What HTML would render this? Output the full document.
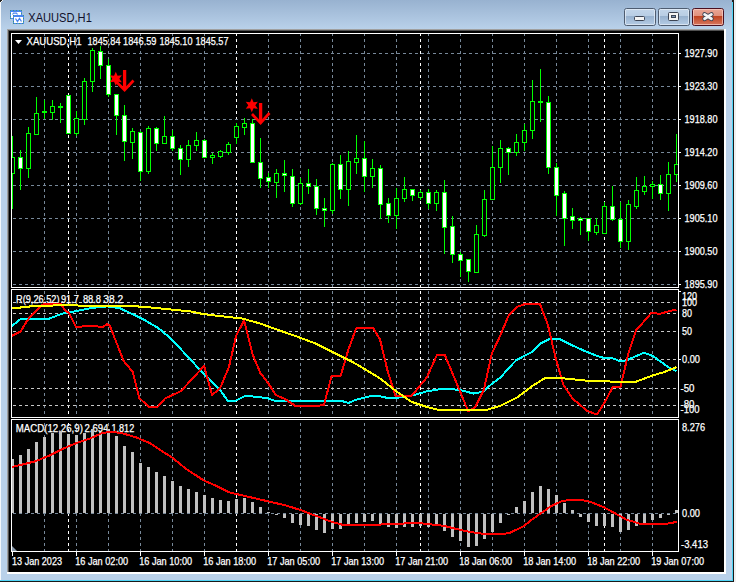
<!DOCTYPE html><html><head><meta charset="utf-8"><style>
html,body{margin:0;padding:0;width:736px;height:582px;overflow:hidden;background:#f0f0f0;font-family:"Liberation Sans", sans-serif;}
.a{position:absolute;}
svg{position:absolute;left:0;top:0;}
text{font-family:"Liberation Sans", sans-serif;}
</style></head><body>
<div class="a" style="left:0;top:0;width:733px;height:582px;background:#b9d1ea"></div><div class="a" style="left:0;top:0;width:733px;height:29px;background:linear-gradient(#98b2d0,#b9d1ea)"></div><div class="a" style="left:0;top:0;width:1px;height:582px;background:#f4f8fc"></div><div class="a" style="left:732px;top:0;width:1px;height:581px;background:#4fd4f6"></div><div class="a" style="left:733px;top:0;width:1px;height:582px;background:#1a1a1a"></div><div class="a" style="left:0;top:580px;width:733px;height:1px;background:#4fd4f6"></div><div class="a" style="left:0;top:581px;width:734px;height:1px;background:#1a1a1a"></div><div class="a" style="left:0;top:0;width:2px;height:2px;background:#202020"></div><div class="a" style="left:1px;top:1px;width:1px;height:1px;background:#f0f0f0"></div><div class="a" style="left:2px;top:0;width:1px;height:1px;background:#f0f0f0"></div><div class="a" style="left:732px;top:0;width:2px;height:2px;background:#202020"></div><div class="a" style="left:7px;top:29px;width:719px;height:545px;background:#fff"></div><div class="a" style="left:7px;top:29px;width:717px;height:543px;background:#a0a0a0"></div><div class="a" style="left:8px;top:30px;width:716px;height:542px;background:#505050"></div><div class="a" style="left:9px;top:31px;width:715px;height:541px;background:#000"></div><svg width="736" height="582" viewBox="0 0 736 582"><text x="28.3" y="22" font-size="12.5" textLength="63.5" lengthAdjust="spacingAndGlyphs" fill="#10102a">XAUUSD,H1</text><g shape-rendering="crispEdges"><rect x="10.5" y="10.5" width="11" height="8" fill="#fff" stroke="#4a86f0"/><rect x="10" y="10" width="12" height="2" fill="#4a86f0"/><rect x="13.5" y="15.5" width="10" height="8" fill="#fff" stroke="#4a86f0"/><rect x="13" y="15" width="11" height="1.5" fill="#4a86f0"/><path d="M10.5,10 V19 M13.5,15 V24 M10,18.5 H13 M10,10.5 H22 M13,23.5 H24 M21.5,10 V15 M23.5,15 V24" stroke="#3e9a78" stroke-width="1" stroke-dasharray="1 2" fill="none"/></g><polyline points="15.5,18.5 17.5,21.5 19.5,18.5 21.5,21.5" fill="none" stroke="#4a86f0" stroke-width="1.3"/><polyline points="12.5,14.5 13.5,13.2 15,13.2 16.5,13.2 17.5,14.5" fill="none" stroke="#4a86f0" stroke-width="1.2"/><defs><linearGradient id="gb" x1="0" y1="0" x2="0" y2="1"><stop offset="0" stop-color="#c4d6ea"/><stop offset="0.45" stop-color="#b8cde4"/><stop offset="0.47" stop-color="#98b2cf"/><stop offset="1" stop-color="#b6cde6"/></linearGradient><linearGradient id="gr" x1="0" y1="0" x2="0" y2="1"><stop offset="0" stop-color="#eaa898"/><stop offset="0.45" stop-color="#e0907c"/><stop offset="0.47" stop-color="#c04422"/><stop offset="1" stop-color="#d87a62"/></linearGradient></defs><rect x="624.5" y="8.5" width="31" height="17" rx="2" fill="url(#gb)" stroke="#4e5c70"/><rect x="625.5" y="9.5" width="29" height="15" rx="1" fill="none" stroke="#e8f0f8" stroke-opacity="0.7"/><rect x="634.5" y="16.5" width="10" height="4" rx="1" fill="#f4f4f4" stroke="#3c4454"/><rect x="658.5" y="8.5" width="31" height="17" rx="2" fill="url(#gb)" stroke="#4e5c70"/><rect x="659.5" y="9.5" width="29" height="15" rx="1" fill="none" stroke="#e8f0f8" stroke-opacity="0.7"/><rect x="668.5" y="12.5" width="10" height="8" rx="1" fill="#f4f4f4" stroke="#3c4454"/><rect x="671.5" y="15.5" width="4" height="2" fill="#7e98b8" stroke="#3c4454"/><rect x="692.5" y="8.5" width="31" height="17" rx="2" fill="url(#gr)" stroke="#4a1020"/><rect x="693.5" y="9.5" width="29" height="15" rx="1" fill="none" stroke="#f8d0c8" stroke-opacity="0.7"/><path d="M704.6,14.4 L711.4,18.8 M711.4,14.4 L704.6,18.8" stroke="#3c4454" stroke-width="4.6" stroke-linecap="round"/><path d="M704.6,14.4 L711.4,18.8 M711.4,14.4 L704.6,18.8" stroke="#f4f4f4" stroke-width="2.8" stroke-linecap="round"/><g shape-rendering="crispEdges"><line x1="44.5" y1="34" x2="44.5" y2="287" stroke="#778899" stroke-width="1" stroke-dasharray="3 3" stroke-dashoffset="1"/><line x1="76.5" y1="34" x2="76.5" y2="287" stroke="#778899" stroke-width="1" stroke-dasharray="3 3" stroke-dashoffset="1"/><line x1="108.5" y1="34" x2="108.5" y2="287" stroke="#778899" stroke-width="1" stroke-dasharray="3 3" stroke-dashoffset="1"/><line x1="140.5" y1="34" x2="140.5" y2="287" stroke="#778899" stroke-width="1" stroke-dasharray="3 3" stroke-dashoffset="1"/><line x1="172.5" y1="34" x2="172.5" y2="287" stroke="#778899" stroke-width="1" stroke-dasharray="3 3" stroke-dashoffset="1"/><line x1="204.5" y1="34" x2="204.5" y2="287" stroke="#778899" stroke-width="1" stroke-dasharray="3 3" stroke-dashoffset="1"/><line x1="268.5" y1="34" x2="268.5" y2="287" stroke="#778899" stroke-width="1" stroke-dasharray="3 3" stroke-dashoffset="1"/><line x1="300.5" y1="34" x2="300.5" y2="287" stroke="#778899" stroke-width="1" stroke-dasharray="3 3" stroke-dashoffset="1"/><line x1="332.5" y1="34" x2="332.5" y2="287" stroke="#778899" stroke-width="1" stroke-dasharray="3 3" stroke-dashoffset="1"/><line x1="364.5" y1="34" x2="364.5" y2="287" stroke="#778899" stroke-width="1" stroke-dasharray="3 3" stroke-dashoffset="1"/><line x1="396.5" y1="34" x2="396.5" y2="287" stroke="#778899" stroke-width="1" stroke-dasharray="3 3" stroke-dashoffset="1"/><line x1="428.5" y1="34" x2="428.5" y2="287" stroke="#778899" stroke-width="1" stroke-dasharray="3 3" stroke-dashoffset="1"/><line x1="460.5" y1="34" x2="460.5" y2="287" stroke="#778899" stroke-width="1" stroke-dasharray="3 3" stroke-dashoffset="1"/><line x1="492.5" y1="34" x2="492.5" y2="287" stroke="#778899" stroke-width="1" stroke-dasharray="3 3" stroke-dashoffset="1"/><line x1="524.5" y1="34" x2="524.5" y2="287" stroke="#778899" stroke-width="1" stroke-dasharray="3 3" stroke-dashoffset="1"/><line x1="556.5" y1="34" x2="556.5" y2="287" stroke="#778899" stroke-width="1" stroke-dasharray="3 3" stroke-dashoffset="1"/><line x1="588.5" y1="34" x2="588.5" y2="287" stroke="#778899" stroke-width="1" stroke-dasharray="3 3" stroke-dashoffset="1"/><line x1="620.5" y1="34" x2="620.5" y2="287" stroke="#778899" stroke-width="1" stroke-dasharray="3 3" stroke-dashoffset="1"/><line x1="652.5" y1="34" x2="652.5" y2="287" stroke="#778899" stroke-width="1" stroke-dasharray="3 3" stroke-dashoffset="1"/><line x1="68.5" y1="34" x2="68.5" y2="287" stroke="#ffffff" stroke-width="1" stroke-dasharray="3 3" stroke-dashoffset="1"/><line x1="236.5" y1="34" x2="236.5" y2="287" stroke="#ffffff" stroke-width="1" stroke-dasharray="3 3" stroke-dashoffset="1"/><line x1="420.5" y1="34" x2="420.5" y2="287" stroke="#ffffff" stroke-width="1" stroke-dasharray="3 3" stroke-dashoffset="1"/><line x1="604.5" y1="34" x2="604.5" y2="287" stroke="#ffffff" stroke-width="1" stroke-dasharray="3 3" stroke-dashoffset="1"/><line x1="44.5" y1="290" x2="44.5" y2="417" stroke="#778899" stroke-width="1" stroke-dasharray="3 3" stroke-dashoffset="5"/><line x1="76.5" y1="290" x2="76.5" y2="417" stroke="#778899" stroke-width="1" stroke-dasharray="3 3" stroke-dashoffset="5"/><line x1="108.5" y1="290" x2="108.5" y2="417" stroke="#778899" stroke-width="1" stroke-dasharray="3 3" stroke-dashoffset="5"/><line x1="140.5" y1="290" x2="140.5" y2="417" stroke="#778899" stroke-width="1" stroke-dasharray="3 3" stroke-dashoffset="5"/><line x1="172.5" y1="290" x2="172.5" y2="417" stroke="#778899" stroke-width="1" stroke-dasharray="3 3" stroke-dashoffset="5"/><line x1="204.5" y1="290" x2="204.5" y2="417" stroke="#778899" stroke-width="1" stroke-dasharray="3 3" stroke-dashoffset="5"/><line x1="268.5" y1="290" x2="268.5" y2="417" stroke="#778899" stroke-width="1" stroke-dasharray="3 3" stroke-dashoffset="5"/><line x1="300.5" y1="290" x2="300.5" y2="417" stroke="#778899" stroke-width="1" stroke-dasharray="3 3" stroke-dashoffset="5"/><line x1="332.5" y1="290" x2="332.5" y2="417" stroke="#778899" stroke-width="1" stroke-dasharray="3 3" stroke-dashoffset="5"/><line x1="364.5" y1="290" x2="364.5" y2="417" stroke="#778899" stroke-width="1" stroke-dasharray="3 3" stroke-dashoffset="5"/><line x1="396.5" y1="290" x2="396.5" y2="417" stroke="#778899" stroke-width="1" stroke-dasharray="3 3" stroke-dashoffset="5"/><line x1="428.5" y1="290" x2="428.5" y2="417" stroke="#778899" stroke-width="1" stroke-dasharray="3 3" stroke-dashoffset="5"/><line x1="460.5" y1="290" x2="460.5" y2="417" stroke="#778899" stroke-width="1" stroke-dasharray="3 3" stroke-dashoffset="5"/><line x1="492.5" y1="290" x2="492.5" y2="417" stroke="#778899" stroke-width="1" stroke-dasharray="3 3" stroke-dashoffset="5"/><line x1="524.5" y1="290" x2="524.5" y2="417" stroke="#778899" stroke-width="1" stroke-dasharray="3 3" stroke-dashoffset="5"/><line x1="556.5" y1="290" x2="556.5" y2="417" stroke="#778899" stroke-width="1" stroke-dasharray="3 3" stroke-dashoffset="5"/><line x1="588.5" y1="290" x2="588.5" y2="417" stroke="#778899" stroke-width="1" stroke-dasharray="3 3" stroke-dashoffset="5"/><line x1="620.5" y1="290" x2="620.5" y2="417" stroke="#778899" stroke-width="1" stroke-dasharray="3 3" stroke-dashoffset="5"/><line x1="652.5" y1="290" x2="652.5" y2="417" stroke="#778899" stroke-width="1" stroke-dasharray="3 3" stroke-dashoffset="5"/><line x1="68.5" y1="290" x2="68.5" y2="417" stroke="#ffffff" stroke-width="1" stroke-dasharray="3 3" stroke-dashoffset="5"/><line x1="236.5" y1="290" x2="236.5" y2="417" stroke="#ffffff" stroke-width="1" stroke-dasharray="3 3" stroke-dashoffset="5"/><line x1="420.5" y1="290" x2="420.5" y2="417" stroke="#ffffff" stroke-width="1" stroke-dasharray="3 3" stroke-dashoffset="5"/><line x1="604.5" y1="290" x2="604.5" y2="417" stroke="#ffffff" stroke-width="1" stroke-dasharray="3 3" stroke-dashoffset="5"/><line x1="44.5" y1="420" x2="44.5" y2="551" stroke="#778899" stroke-width="1" stroke-dasharray="3 3" stroke-dashoffset="3"/><line x1="76.5" y1="420" x2="76.5" y2="551" stroke="#778899" stroke-width="1" stroke-dasharray="3 3" stroke-dashoffset="3"/><line x1="108.5" y1="420" x2="108.5" y2="551" stroke="#778899" stroke-width="1" stroke-dasharray="3 3" stroke-dashoffset="3"/><line x1="140.5" y1="420" x2="140.5" y2="551" stroke="#778899" stroke-width="1" stroke-dasharray="3 3" stroke-dashoffset="3"/><line x1="172.5" y1="420" x2="172.5" y2="551" stroke="#778899" stroke-width="1" stroke-dasharray="3 3" stroke-dashoffset="3"/><line x1="204.5" y1="420" x2="204.5" y2="551" stroke="#778899" stroke-width="1" stroke-dasharray="3 3" stroke-dashoffset="3"/><line x1="268.5" y1="420" x2="268.5" y2="551" stroke="#778899" stroke-width="1" stroke-dasharray="3 3" stroke-dashoffset="3"/><line x1="300.5" y1="420" x2="300.5" y2="551" stroke="#778899" stroke-width="1" stroke-dasharray="3 3" stroke-dashoffset="3"/><line x1="332.5" y1="420" x2="332.5" y2="551" stroke="#778899" stroke-width="1" stroke-dasharray="3 3" stroke-dashoffset="3"/><line x1="364.5" y1="420" x2="364.5" y2="551" stroke="#778899" stroke-width="1" stroke-dasharray="3 3" stroke-dashoffset="3"/><line x1="396.5" y1="420" x2="396.5" y2="551" stroke="#778899" stroke-width="1" stroke-dasharray="3 3" stroke-dashoffset="3"/><line x1="428.5" y1="420" x2="428.5" y2="551" stroke="#778899" stroke-width="1" stroke-dasharray="3 3" stroke-dashoffset="3"/><line x1="460.5" y1="420" x2="460.5" y2="551" stroke="#778899" stroke-width="1" stroke-dasharray="3 3" stroke-dashoffset="3"/><line x1="492.5" y1="420" x2="492.5" y2="551" stroke="#778899" stroke-width="1" stroke-dasharray="3 3" stroke-dashoffset="3"/><line x1="524.5" y1="420" x2="524.5" y2="551" stroke="#778899" stroke-width="1" stroke-dasharray="3 3" stroke-dashoffset="3"/><line x1="556.5" y1="420" x2="556.5" y2="551" stroke="#778899" stroke-width="1" stroke-dasharray="3 3" stroke-dashoffset="3"/><line x1="588.5" y1="420" x2="588.5" y2="551" stroke="#778899" stroke-width="1" stroke-dasharray="3 3" stroke-dashoffset="3"/><line x1="620.5" y1="420" x2="620.5" y2="551" stroke="#778899" stroke-width="1" stroke-dasharray="3 3" stroke-dashoffset="3"/><line x1="652.5" y1="420" x2="652.5" y2="551" stroke="#778899" stroke-width="1" stroke-dasharray="3 3" stroke-dashoffset="3"/><line x1="68.5" y1="420" x2="68.5" y2="551" stroke="#ffffff" stroke-width="1" stroke-dasharray="3 3" stroke-dashoffset="3"/><line x1="236.5" y1="420" x2="236.5" y2="551" stroke="#ffffff" stroke-width="1" stroke-dasharray="3 3" stroke-dashoffset="3"/><line x1="420.5" y1="420" x2="420.5" y2="551" stroke="#ffffff" stroke-width="1" stroke-dasharray="3 3" stroke-dashoffset="3"/><line x1="604.5" y1="420" x2="604.5" y2="551" stroke="#ffffff" stroke-width="1" stroke-dasharray="3 3" stroke-dashoffset="3"/><line x1="13" y1="53.5" x2="678" y2="53.5" stroke="#778899" stroke-width="1" stroke-dasharray="3 3"/><line x1="13" y1="86.5" x2="678" y2="86.5" stroke="#778899" stroke-width="1" stroke-dasharray="3 3"/><line x1="13" y1="119.5" x2="678" y2="119.5" stroke="#778899" stroke-width="1" stroke-dasharray="3 3"/><line x1="13" y1="152.5" x2="678" y2="152.5" stroke="#778899" stroke-width="1" stroke-dasharray="3 3"/><line x1="13" y1="185.5" x2="678" y2="185.5" stroke="#778899" stroke-width="1" stroke-dasharray="3 3"/><line x1="13" y1="218.5" x2="678" y2="218.5" stroke="#778899" stroke-width="1" stroke-dasharray="3 3"/><line x1="13" y1="251.5" x2="678" y2="251.5" stroke="#778899" stroke-width="1" stroke-dasharray="3 3"/><line x1="13" y1="284.5" x2="678" y2="284.5" stroke="#778899" stroke-width="1" stroke-dasharray="3 3"/><line x1="13" y1="302.5" x2="678" y2="302.5" stroke="#c8c8c8" stroke-width="1" stroke-dasharray="3 3"/><line x1="13" y1="313.5" x2="678" y2="313.5" stroke="#c8c8c8" stroke-width="1" stroke-dasharray="3 3"/><line x1="13" y1="331.5" x2="678" y2="331.5" stroke="#c8c8c8" stroke-width="1" stroke-dasharray="3 3"/><line x1="13" y1="359.5" x2="678" y2="359.5" stroke="#c8c8c8" stroke-width="1" stroke-dasharray="3 3"/><line x1="13" y1="388.5" x2="678" y2="388.5" stroke="#c8c8c8" stroke-width="1" stroke-dasharray="3 3"/><line x1="13" y1="405.5" x2="678" y2="405.5" stroke="#c8c8c8" stroke-width="1" stroke-dasharray="3 3"/><line x1="13" y1="513.5" x2="678" y2="513.5" stroke="#778899" stroke-width="1" stroke-dasharray="3 3"/><rect x="11.5" y="33.5" width="667" height="254" fill="none" stroke="#fff" stroke-width="1"/><rect x="11.5" y="289.5" width="667" height="128" fill="none" stroke="#fff" stroke-width="1"/><rect x="11.5" y="419.5" width="667" height="132" fill="none" stroke="#fff" stroke-width="1"/></g><polygon points="15,40 22,40 18.5,44" fill="#fff"/><rect x="679" y="291" width="2" height="1" fill="#fff"/><rect x="679" y="359" width="2" height="1" fill="#fff"/><text x="26.5" y="45" font-size="10.5" fill="#fff" stroke="#fff" stroke-width="0.25" text-anchor="start" textLength="55" lengthAdjust="spacingAndGlyphs" >XAUUSD,H1</text><text x="87.5" y="45" font-size="10.5" fill="#fff" stroke="#fff" stroke-width="0.25" text-anchor="start" textLength="33" lengthAdjust="spacingAndGlyphs" >1845.84</text><text x="123.1" y="45" font-size="10.5" fill="#fff" stroke="#fff" stroke-width="0.25" text-anchor="start" textLength="33.400000000000006" lengthAdjust="spacingAndGlyphs" >1846.59</text><text x="159.5" y="45" font-size="10.5" fill="#fff" stroke="#fff" stroke-width="0.25" text-anchor="start" textLength="33" lengthAdjust="spacingAndGlyphs" >1845.10</text><text x="195.5" y="45" font-size="10.5" fill="#fff" stroke="#fff" stroke-width="0.25" text-anchor="start" textLength="33" lengthAdjust="spacingAndGlyphs" >1845.57</text><text x="16.0" y="303" font-size="10.5" fill="#fff" stroke="#fff" stroke-width="0.25" text-anchor="start" textLength="43.5" lengthAdjust="spacingAndGlyphs" >R(9,26,52)</text><text x="60.9" y="303" font-size="10.5" fill="#fff" stroke="#fff" stroke-width="0.25" text-anchor="start" textLength="18.1" lengthAdjust="spacingAndGlyphs" >91.7</text><text x="82.9" y="303" font-size="10.5" fill="#fff" stroke="#fff" stroke-width="0.25" text-anchor="start" textLength="18.099999999999994" lengthAdjust="spacingAndGlyphs" >88.8</text><text x="103.3" y="303" font-size="10.5" fill="#fff" stroke="#fff" stroke-width="0.25" text-anchor="start" textLength="19.799999999999997" lengthAdjust="spacingAndGlyphs" >38.2</text><text x="15.7" y="432" font-size="10.5" fill="#fff" stroke="#fff" stroke-width="0.25" text-anchor="start" textLength="67.2" lengthAdjust="spacingAndGlyphs" >MACD(12,26,9)</text><text x="84.5" y="432" font-size="10.5" fill="#fff" stroke="#fff" stroke-width="0.25" text-anchor="start" textLength="24" lengthAdjust="spacingAndGlyphs" >2.694</text><text x="111.5" y="432" font-size="10.5" fill="#fff" stroke="#fff" stroke-width="0.25" text-anchor="start" textLength="22.69999999999999" lengthAdjust="spacingAndGlyphs" >1.812</text><clipPath id="cm"><rect x="12" y="34" width="666" height="253"/></clipPath><clipPath id="cr"><rect x="12" y="290" width="666" height="127"/></clipPath><clipPath id="cd"><rect x="12" y="420" width="666" height="131"/></clipPath><g shape-rendering="crispEdges" clip-path="url(#cm)"><rect x="12" y="136" width="1" height="73" fill="#00ff00"/><rect x="10.5" y="157.5" width="4" height="16" fill="#000" stroke="#00ff00" stroke-width="1"/><rect x="20" y="150" width="1" height="40" fill="#00ff00"/><rect x="18.5" y="157.5" width="4" height="11" fill="#fff" stroke="#00ff00" stroke-width="1"/><rect x="28" y="127" width="1" height="51" fill="#00ff00"/><rect x="26.5" y="133.5" width="4" height="35" fill="#000" stroke="#00ff00" stroke-width="1"/><rect x="36" y="97" width="1" height="38" fill="#00ff00"/><rect x="34.5" y="113.5" width="4" height="21" fill="#000" stroke="#00ff00" stroke-width="1"/><rect x="44" y="100" width="1" height="19" fill="#00ff00"/><rect x="42.5" y="111.5" width="4" height="1" fill="#000" stroke="#00ff00" stroke-width="1"/><rect x="52" y="100" width="1" height="20" fill="#00ff00"/><rect x="50.5" y="106.5" width="4" height="6" fill="#000" stroke="#00ff00" stroke-width="1"/><rect x="60" y="103" width="1" height="20" fill="#00ff00"/><rect x="58.5" y="106.5" width="4" height="1" fill="#000" stroke="#00ff00" stroke-width="1"/><rect x="68" y="95" width="1" height="39" fill="#00ff00"/><rect x="66.5" y="95.5" width="4" height="38" fill="#fff" stroke="#00ff00" stroke-width="1"/><rect x="76" y="111" width="1" height="25" fill="#00ff00"/><rect x="74.5" y="118.5" width="4" height="15" fill="#000" stroke="#00ff00" stroke-width="1"/><rect x="84" y="78" width="1" height="47" fill="#00ff00"/><rect x="82.5" y="81.5" width="4" height="38" fill="#000" stroke="#00ff00" stroke-width="1"/><rect x="92" y="48" width="1" height="44" fill="#00ff00"/><rect x="90.5" y="50.5" width="4" height="31" fill="#000" stroke="#00ff00" stroke-width="1"/><rect x="100" y="46" width="1" height="33" fill="#00ff00"/><rect x="98.5" y="51.5" width="4" height="14" fill="#fff" stroke="#00ff00" stroke-width="1"/><rect x="108" y="59" width="1" height="38" fill="#00ff00"/><rect x="106.5" y="65.5" width="4" height="29" fill="#fff" stroke="#00ff00" stroke-width="1"/><rect x="116" y="94" width="1" height="41" fill="#00ff00"/><rect x="114.5" y="94.5" width="4" height="21" fill="#fff" stroke="#00ff00" stroke-width="1"/><rect x="124" y="105" width="1" height="56" fill="#00ff00"/><rect x="122.5" y="115.5" width="4" height="26" fill="#fff" stroke="#00ff00" stroke-width="1"/><rect x="132" y="128" width="1" height="31" fill="#00ff00"/><rect x="130.5" y="131.5" width="4" height="11" fill="#000" stroke="#00ff00" stroke-width="1"/><rect x="140" y="131" width="1" height="50" fill="#00ff00"/><rect x="138.5" y="132.5" width="4" height="39" fill="#fff" stroke="#00ff00" stroke-width="1"/><rect x="148" y="126" width="1" height="48" fill="#00ff00"/><rect x="146.5" y="128.5" width="4" height="43" fill="#000" stroke="#00ff00" stroke-width="1"/><rect x="156" y="127" width="1" height="24" fill="#00ff00"/><rect x="154.5" y="128.5" width="4" height="15" fill="#fff" stroke="#00ff00" stroke-width="1"/><rect x="164" y="116" width="1" height="28" fill="#00ff00"/><rect x="162.5" y="136.5" width="4" height="7" fill="#000" stroke="#00ff00" stroke-width="1"/><rect x="172" y="130" width="1" height="21" fill="#00ff00"/><rect x="170.5" y="136.5" width="4" height="12" fill="#fff" stroke="#00ff00" stroke-width="1"/><rect x="180" y="145" width="1" height="30" fill="#00ff00"/><rect x="178.5" y="148.5" width="4" height="11" fill="#fff" stroke="#00ff00" stroke-width="1"/><rect x="188" y="140" width="1" height="27" fill="#00ff00"/><rect x="186.5" y="145.5" width="4" height="14" fill="#000" stroke="#00ff00" stroke-width="1"/><rect x="196" y="132" width="1" height="19" fill="#00ff00"/><rect x="194.5" y="140.5" width="4" height="5" fill="#000" stroke="#00ff00" stroke-width="1"/><rect x="204" y="139" width="1" height="19" fill="#00ff00"/><rect x="202.5" y="140.5" width="4" height="17" fill="#fff" stroke="#00ff00" stroke-width="1"/><rect x="212" y="153" width="1" height="11" fill="#00ff00"/><rect x="210.5" y="155.5" width="4" height="2" fill="#000" stroke="#00ff00" stroke-width="1"/><rect x="220" y="150" width="1" height="8" fill="#00ff00"/><rect x="218.5" y="151.5" width="4" height="5" fill="#000" stroke="#00ff00" stroke-width="1"/><rect x="228" y="142" width="1" height="13" fill="#00ff00"/><rect x="226.5" y="144.5" width="4" height="8" fill="#000" stroke="#00ff00" stroke-width="1"/><rect x="236" y="123" width="1" height="21" fill="#00ff00"/><rect x="234.5" y="126.5" width="4" height="11" fill="#000" stroke="#00ff00" stroke-width="1"/><rect x="244" y="118" width="1" height="17" fill="#00ff00"/><rect x="242.5" y="123.5" width="4" height="4" fill="#000" stroke="#00ff00" stroke-width="1"/><rect x="252" y="119" width="1" height="44" fill="#00ff00"/><rect x="250.5" y="123.5" width="4" height="39" fill="#fff" stroke="#00ff00" stroke-width="1"/><rect x="260" y="138" width="1" height="50" fill="#00ff00"/><rect x="258.5" y="162.5" width="4" height="16" fill="#fff" stroke="#00ff00" stroke-width="1"/><rect x="268" y="173" width="1" height="15" fill="#00ff00"/><rect x="266.5" y="177.5" width="4" height="4" fill="#fff" stroke="#00ff00" stroke-width="1"/><rect x="276" y="169" width="1" height="29" fill="#00ff00"/><rect x="274.5" y="173.5" width="4" height="9" fill="#000" stroke="#00ff00" stroke-width="1"/><rect x="284" y="160" width="1" height="32" fill="#00ff00"/><rect x="282.5" y="173.5" width="4" height="2" fill="#fff" stroke="#00ff00" stroke-width="1"/><rect x="292" y="169" width="1" height="38" fill="#00ff00"/><rect x="290.5" y="176.5" width="4" height="27" fill="#fff" stroke="#00ff00" stroke-width="1"/><rect x="300" y="178" width="1" height="27" fill="#00ff00"/><rect x="298.5" y="183.5" width="4" height="20" fill="#000" stroke="#00ff00" stroke-width="1"/><rect x="308" y="169" width="1" height="25" fill="#00ff00"/><rect x="306.5" y="183.5" width="4" height="3" fill="#fff" stroke="#00ff00" stroke-width="1"/><rect x="316" y="179" width="1" height="36" fill="#00ff00"/><rect x="314.5" y="186.5" width="4" height="22" fill="#fff" stroke="#00ff00" stroke-width="1"/><rect x="324" y="198" width="1" height="29" fill="#00ff00"/><rect x="322.5" y="208.5" width="4" height="2" fill="#fff" stroke="#00ff00" stroke-width="1"/><rect x="332" y="163" width="1" height="51" fill="#00ff00"/><rect x="330.5" y="164.5" width="4" height="46" fill="#000" stroke="#00ff00" stroke-width="1"/><rect x="340" y="155" width="1" height="44" fill="#00ff00"/><rect x="338.5" y="164.5" width="4" height="25" fill="#fff" stroke="#00ff00" stroke-width="1"/><rect x="348" y="151" width="1" height="55" fill="#00ff00"/><rect x="346.5" y="161.5" width="4" height="28" fill="#000" stroke="#00ff00" stroke-width="1"/><rect x="356" y="135" width="1" height="39" fill="#00ff00"/><rect x="354.5" y="158.5" width="4" height="4" fill="#000" stroke="#00ff00" stroke-width="1"/><rect x="364" y="141" width="1" height="51" fill="#00ff00"/><rect x="362.5" y="158.5" width="4" height="18" fill="#fff" stroke="#00ff00" stroke-width="1"/><rect x="372" y="159" width="1" height="29" fill="#00ff00"/><rect x="370.5" y="168.5" width="4" height="8" fill="#000" stroke="#00ff00" stroke-width="1"/><rect x="380" y="165" width="1" height="54" fill="#00ff00"/><rect x="378.5" y="168.5" width="4" height="36" fill="#fff" stroke="#00ff00" stroke-width="1"/><rect x="388" y="198" width="1" height="25" fill="#00ff00"/><rect x="386.5" y="203.5" width="4" height="12" fill="#fff" stroke="#00ff00" stroke-width="1"/><rect x="396" y="188" width="1" height="41" fill="#00ff00"/><rect x="394.5" y="198.5" width="4" height="17" fill="#000" stroke="#00ff00" stroke-width="1"/><rect x="404" y="177" width="1" height="25" fill="#00ff00"/><rect x="402.5" y="189.5" width="4" height="9" fill="#000" stroke="#00ff00" stroke-width="1"/><rect x="412" y="189" width="1" height="12" fill="#00ff00"/><rect x="410.5" y="189.5" width="4" height="6" fill="#fff" stroke="#00ff00" stroke-width="1"/><rect x="420" y="190" width="1" height="10" fill="#00ff00"/><rect x="418.5" y="192.5" width="4" height="5" fill="#000" stroke="#00ff00" stroke-width="1"/><rect x="428" y="189" width="1" height="20" fill="#00ff00"/><rect x="426.5" y="192.5" width="4" height="11" fill="#fff" stroke="#00ff00" stroke-width="1"/><rect x="436" y="190" width="1" height="21" fill="#00ff00"/><rect x="434.5" y="192.5" width="4" height="11" fill="#000" stroke="#00ff00" stroke-width="1"/><rect x="444" y="180" width="1" height="74" fill="#00ff00"/><rect x="442.5" y="192.5" width="4" height="35" fill="#fff" stroke="#00ff00" stroke-width="1"/><rect x="452" y="216" width="1" height="47" fill="#00ff00"/><rect x="450.5" y="226.5" width="4" height="28" fill="#fff" stroke="#00ff00" stroke-width="1"/><rect x="460" y="252" width="1" height="25" fill="#00ff00"/><rect x="458.5" y="254.5" width="4" height="6" fill="#fff" stroke="#00ff00" stroke-width="1"/><rect x="468" y="259" width="1" height="23" fill="#00ff00"/><rect x="466.5" y="259.5" width="4" height="12" fill="#fff" stroke="#00ff00" stroke-width="1"/><rect x="476" y="225" width="1" height="48" fill="#00ff00"/><rect x="474.5" y="234.5" width="4" height="38" fill="#000" stroke="#00ff00" stroke-width="1"/><rect x="484" y="190" width="1" height="47" fill="#00ff00"/><rect x="482.5" y="199.5" width="4" height="36" fill="#000" stroke="#00ff00" stroke-width="1"/><rect x="492" y="146" width="1" height="54" fill="#00ff00"/><rect x="490.5" y="167.5" width="4" height="32" fill="#000" stroke="#00ff00" stroke-width="1"/><rect x="500" y="140" width="1" height="43" fill="#00ff00"/><rect x="498.5" y="148.5" width="4" height="19" fill="#000" stroke="#00ff00" stroke-width="1"/><rect x="508" y="147" width="1" height="28" fill="#00ff00"/><rect x="506.5" y="148.5" width="4" height="4" fill="#fff" stroke="#00ff00" stroke-width="1"/><rect x="516" y="134" width="1" height="22" fill="#00ff00"/><rect x="514.5" y="142.5" width="4" height="10" fill="#000" stroke="#00ff00" stroke-width="1"/><rect x="524" y="124" width="1" height="27" fill="#00ff00"/><rect x="522.5" y="130.5" width="4" height="12" fill="#000" stroke="#00ff00" stroke-width="1"/><rect x="532" y="80" width="1" height="59" fill="#00ff00"/><rect x="530.5" y="101.5" width="4" height="29" fill="#000" stroke="#00ff00" stroke-width="1"/><rect x="540" y="69" width="1" height="53" fill="#00ff00"/><rect x="538.5" y="101.5" width="4" height="1" fill="#000" stroke="#00ff00" stroke-width="1"/><rect x="548" y="96" width="1" height="78" fill="#00ff00"/><rect x="546.5" y="102.5" width="4" height="65" fill="#fff" stroke="#00ff00" stroke-width="1"/><rect x="556" y="163" width="1" height="53" fill="#00ff00"/><rect x="554.5" y="167.5" width="4" height="28" fill="#fff" stroke="#00ff00" stroke-width="1"/><rect x="564" y="191" width="1" height="55" fill="#00ff00"/><rect x="562.5" y="193.5" width="4" height="25" fill="#fff" stroke="#00ff00" stroke-width="1"/><rect x="572" y="208" width="1" height="21" fill="#00ff00"/><rect x="570.5" y="216.5" width="4" height="4" fill="#fff" stroke="#00ff00" stroke-width="1"/><rect x="580" y="217" width="1" height="18" fill="#00ff00"/><rect x="578.5" y="218.5" width="4" height="2" fill="#fff" stroke="#00ff00" stroke-width="1"/><rect x="588" y="218" width="1" height="23" fill="#00ff00"/><rect x="586.5" y="218.5" width="4" height="13" fill="#fff" stroke="#00ff00" stroke-width="1"/><rect x="596" y="218" width="1" height="17" fill="#00ff00"/><rect x="594.5" y="225.5" width="4" height="7" fill="#000" stroke="#00ff00" stroke-width="1"/><rect x="604" y="202" width="1" height="32" fill="#00ff00"/><rect x="602.5" y="206.5" width="4" height="27" fill="#000" stroke="#00ff00" stroke-width="1"/><rect x="612" y="186" width="1" height="35" fill="#00ff00"/><rect x="610.5" y="206.5" width="4" height="13" fill="#fff" stroke="#00ff00" stroke-width="1"/><rect x="620" y="202" width="1" height="46" fill="#00ff00"/><rect x="618.5" y="219.5" width="4" height="22" fill="#fff" stroke="#00ff00" stroke-width="1"/><rect x="628" y="200" width="1" height="50" fill="#00ff00"/><rect x="626.5" y="204.5" width="4" height="37" fill="#000" stroke="#00ff00" stroke-width="1"/><rect x="636" y="177" width="1" height="32" fill="#00ff00"/><rect x="634.5" y="190.5" width="4" height="16" fill="#000" stroke="#00ff00" stroke-width="1"/><rect x="644" y="176" width="1" height="19" fill="#00ff00"/><rect x="642.5" y="186.5" width="4" height="5" fill="#000" stroke="#00ff00" stroke-width="1"/><rect x="652" y="181" width="1" height="18" fill="#00ff00"/><rect x="650.5" y="184.5" width="4" height="2" fill="#000" stroke="#00ff00" stroke-width="1"/><rect x="660" y="175" width="1" height="25" fill="#00ff00"/><rect x="658.5" y="184.5" width="4" height="9" fill="#fff" stroke="#00ff00" stroke-width="1"/><rect x="668" y="162" width="1" height="49" fill="#00ff00"/><rect x="666.5" y="174.5" width="4" height="19" fill="#000" stroke="#00ff00" stroke-width="1"/><rect x="676" y="134" width="1" height="48" fill="#00ff00"/><rect x="674.5" y="164.5" width="4" height="10" fill="#000" stroke="#00ff00" stroke-width="1"/></g><polygon points="115.80,71.80 117.55,75.77 121.86,75.30 119.30,78.80 121.86,82.30 117.55,81.83 115.80,85.80 114.05,81.83 109.74,82.30 112.30,78.80 109.74,75.30 114.05,75.77" fill="#ff0000"/><polygon points="251.80,98.30 253.55,102.27 257.86,101.80 255.30,105.30 257.86,108.80 253.55,108.33 251.80,112.30 250.05,108.33 245.74,108.80 248.30,105.30 245.74,101.80 250.05,102.27" fill="#ff0000"/><path d="M124.6,70 V89" fill="none" stroke="#ff0000" stroke-width="3.3"/><path d="M116,81.5 L124.6,90 L133.5,80.5" fill="none" stroke="#ff0000" stroke-width="2.7" stroke-linejoin="miter"/><path d="M260.6,103 V122" fill="none" stroke="#ff0000" stroke-width="3.3"/><path d="M252,114 L260.6,123 L269.5,113" fill="none" stroke="#ff0000" stroke-width="2.7" stroke-linejoin="miter"/><g clip-path="url(#cr)"><polyline points="12.0,326.0 20.7,318.9 48.3,318.9 54.0,316.8 59.8,314.5 68.0,312.2 75.6,311.3 91.3,308.0 107.0,306.4 119.2,308.0 131.5,313.6 144.9,320.3 158.3,328.1 171.7,339.3 185.1,353.8 198.5,368.3 212.0,382.4 220.0,390.0 227.8,400.7 235.6,400.7 244.6,396.3 251.3,396.3 267.0,398.0 274.7,400.7 340.7,400.7 348.5,403.0 356.3,399.6 372.0,395.8 380.0,396.3 387.8,398.0 395.6,398.0 411.3,395.8 426.9,391.3 440.3,389.1 458.2,389.6 473.9,393.6 482.8,391.8 491.7,384.0 500.7,377.3 508.5,368.3 516.3,360.1 532.0,352.0 540.0,343.7 550.1,338.6 560.2,339.3 573.6,346.0 583.6,350.5 597.0,356.0 603.7,357.8 612.7,358.3 618.3,360.5 626.1,360.5 644.0,352.7 652.9,356.0 668.5,367.2 676.4,371.2" fill="none" stroke="#00ffff" stroke-width="2" stroke-linejoin="round" stroke-linecap="butt" shape-rendering="crispEdges"/><polyline points="12.0,335.8 20.7,331.5 27.0,320.8 32.8,313.9 38.0,308.7 42.6,304.5 61.0,304.0 65.6,311.0 68.9,312.5 76.1,327.0 84.6,326.3 92.4,325.9 102.5,327.0 107.0,324.3 109.6,325.2 123.7,361.0 132.6,371.7 139.3,398.0 149.4,407.4 157.2,407.4 165.0,398.5 180.7,391.3 204.1,366.0 212.0,395.0 220.0,388.4 228.9,367.2 236.1,335.9 244.1,320.3 252.4,353.8 260.2,372.8 268.0,382.9 275.9,395.1 284.8,398.9 296.0,406.3 309.4,406.3 323.9,405.2 331.7,375.7 340.7,375.7 348.5,349.3 356.3,328.1 373.1,328.1 380.0,339.3 387.8,371.7 395.6,396.3 411.3,396.3 426.9,377.3 437.0,354.9 444.8,354.9 459.3,389.6 468.3,411.5 475.0,407.4 483.9,389.6 491.7,353.8 499.6,337.0 508.5,315.8 516.3,307.3 524.1,304.2 540.0,304.2 547.9,324.8 555.7,358.3 563.5,385.1 572.5,398.5 587.0,410.8 597.0,414.6 604.9,401.8 612.7,387.3 620.5,386.9 628.3,353.8 636.1,330.3 651.8,312.5 659.6,314.0 668.5,311.3 676.4,309.6" fill="none" stroke="#ff0000" stroke-width="2" stroke-linejoin="round" stroke-linecap="butt" shape-rendering="crispEdges"/><polyline points="12.0,308.2 20.1,308.2 21.2,307.0 28.7,307.0 29.9,305.9 60.0,305.4 127.0,305.8 144.9,306.9 171.7,309.6 189.6,311.3 203.0,314.0 220.0,316.1 242.3,318.5 260.2,323.6 279.2,330.3 298.2,337.0 316.1,343.7 334.0,352.7 351.8,361.6 365.3,369.4 380.0,378.4 395.6,390.7 411.3,401.8 426.9,407.0 438.1,409.7 487.3,409.7 500.7,405.6 516.3,398.0 532.0,386.2 544.5,378.4 563.5,378.4 585.9,380.6 614.9,381.7 636.1,381.7 651.8,375.7 664.1,372.1 676.4,367.2" fill="none" stroke="#ffff00" stroke-width="2" stroke-linejoin="round" stroke-linecap="butt" shape-rendering="crispEdges"/></g><g shape-rendering="crispEdges" clip-path="url(#cd)"><rect x="11" y="459" width="3" height="54" fill="#c0c0c0"/><rect x="19" y="455" width="3" height="58" fill="#c0c0c0"/><rect x="27" y="449" width="3" height="64" fill="#c0c0c0"/><rect x="35" y="442" width="3" height="71" fill="#c0c0c0"/><rect x="43" y="437" width="3" height="76" fill="#c0c0c0"/><rect x="51" y="433" width="3" height="80" fill="#c0c0c0"/><rect x="59" y="431" width="3" height="82" fill="#c0c0c0"/><rect x="67" y="434" width="3" height="79" fill="#c0c0c0"/><rect x="75" y="435" width="3" height="78" fill="#c0c0c0"/><rect x="83" y="433" width="3" height="80" fill="#c0c0c0"/><rect x="91" y="429" width="3" height="84" fill="#c0c0c0"/><rect x="99" y="432" width="3" height="81" fill="#c0c0c0"/><rect x="107" y="429" width="3" height="84" fill="#c0c0c0"/><rect x="115" y="436" width="3" height="77" fill="#c0c0c0"/><rect x="123" y="446" width="3" height="67" fill="#c0c0c0"/><rect x="131" y="452" width="3" height="61" fill="#c0c0c0"/><rect x="139" y="463" width="3" height="50" fill="#c0c0c0"/><rect x="147" y="467" width="3" height="46" fill="#c0c0c0"/><rect x="155" y="472" width="3" height="41" fill="#c0c0c0"/><rect x="163" y="476" width="3" height="37" fill="#c0c0c0"/><rect x="171" y="481" width="3" height="32" fill="#c0c0c0"/><rect x="179" y="486" width="3" height="27" fill="#c0c0c0"/><rect x="187" y="489" width="3" height="24" fill="#c0c0c0"/><rect x="195" y="492" width="3" height="21" fill="#c0c0c0"/><rect x="203" y="495" width="3" height="18" fill="#c0c0c0"/><rect x="211" y="498" width="3" height="15" fill="#c0c0c0"/><rect x="219" y="500" width="3" height="13" fill="#c0c0c0"/><rect x="227" y="501" width="3" height="12" fill="#c0c0c0"/><rect x="235" y="499" width="3" height="14" fill="#c0c0c0"/><rect x="243" y="498" width="3" height="15" fill="#c0c0c0"/><rect x="251" y="502" width="3" height="11" fill="#c0c0c0"/><rect x="259" y="507" width="3" height="6" fill="#c0c0c0"/><rect x="267" y="512" width="3" height="1" fill="#c0c0c0"/><rect x="275" y="514" width="3" height="1" fill="#c0c0c0"/><rect x="283" y="514" width="3" height="4" fill="#c0c0c0"/><rect x="291" y="514" width="3" height="9" fill="#c0c0c0"/><rect x="299" y="514" width="3" height="11" fill="#c0c0c0"/><rect x="307" y="514" width="3" height="12" fill="#c0c0c0"/><rect x="315" y="514" width="3" height="16" fill="#c0c0c0"/><rect x="323" y="514" width="3" height="19" fill="#c0c0c0"/><rect x="331" y="514" width="3" height="15" fill="#c0c0c0"/><rect x="339" y="514" width="3" height="15" fill="#c0c0c0"/><rect x="347" y="514" width="3" height="12" fill="#c0c0c0"/><rect x="355" y="514" width="3" height="9" fill="#c0c0c0"/><rect x="363" y="514" width="3" height="8" fill="#c0c0c0"/><rect x="371" y="514" width="3" height="7" fill="#c0c0c0"/><rect x="379" y="514" width="3" height="10" fill="#c0c0c0"/><rect x="387" y="514" width="3" height="13" fill="#c0c0c0"/><rect x="395" y="514" width="3" height="14" fill="#c0c0c0"/><rect x="403" y="514" width="3" height="13" fill="#c0c0c0"/><rect x="411" y="514" width="3" height="13" fill="#c0c0c0"/><rect x="419" y="514" width="3" height="12" fill="#c0c0c0"/><rect x="427" y="514" width="3" height="13" fill="#c0c0c0"/><rect x="435" y="514" width="3" height="12" fill="#c0c0c0"/><rect x="443" y="514" width="3" height="17" fill="#c0c0c0"/><rect x="451" y="514" width="3" height="23" fill="#c0c0c0"/><rect x="459" y="514" width="3" height="27" fill="#c0c0c0"/><rect x="467" y="514" width="3" height="33" fill="#c0c0c0"/><rect x="475" y="514" width="3" height="32" fill="#c0c0c0"/><rect x="483" y="514" width="3" height="25" fill="#c0c0c0"/><rect x="491" y="514" width="3" height="18" fill="#c0c0c0"/><rect x="499" y="514" width="3" height="9" fill="#c0c0c0"/><rect x="507" y="514" width="3" height="1" fill="#c0c0c0"/><rect x="515" y="507" width="3" height="6" fill="#c0c0c0"/><rect x="523" y="501" width="3" height="12" fill="#c0c0c0"/><rect x="531" y="492" width="3" height="21" fill="#c0c0c0"/><rect x="539" y="486" width="3" height="27" fill="#c0c0c0"/><rect x="547" y="489" width="3" height="24" fill="#c0c0c0"/><rect x="555" y="495" width="3" height="18" fill="#c0c0c0"/><rect x="563" y="503" width="3" height="10" fill="#c0c0c0"/><rect x="571" y="510" width="3" height="3" fill="#c0c0c0"/><rect x="579" y="514" width="3" height="3" fill="#c0c0c0"/><rect x="587" y="514" width="3" height="8" fill="#c0c0c0"/><rect x="595" y="514" width="3" height="12" fill="#c0c0c0"/><rect x="603" y="514" width="3" height="12" fill="#c0c0c0"/><rect x="611" y="514" width="3" height="13" fill="#c0c0c0"/><rect x="619" y="514" width="3" height="18" fill="#c0c0c0"/><rect x="627" y="514" width="3" height="16" fill="#c0c0c0"/><rect x="635" y="514" width="3" height="12" fill="#c0c0c0"/><rect x="643" y="514" width="3" height="9" fill="#c0c0c0"/><rect x="651" y="514" width="3" height="6" fill="#c0c0c0"/><rect x="659" y="514" width="3" height="4" fill="#c0c0c0"/><rect x="667" y="514" width="3" height="1" fill="#c0c0c0"/><rect x="675" y="510" width="3" height="3" fill="#c0c0c0"/></g><g clip-path="url(#cd)"><polyline points="12.0,467.0 21.7,464.7 35.4,461.3 49.1,455.6 62.9,448.7 76.6,443.0 90.3,438.4 101.7,433.2 110.9,431.6 122.3,433.2 136.0,437.3 149.7,443.0 160.0,449.9 172.6,457.9 185.1,468.1 203.4,480.3 214.9,485.3 228.6,492.1 240.0,494.9 256.0,498.5 269.7,501.7 285.7,505.4 301.7,510.4 312.0,514.5 321.1,517.7 330.3,521.4 341.7,524.6 380.6,524.6 382.9,523.7 403.4,523.7 406.9,522.5 419.4,522.5 424.0,523.7 433.1,524.6 444.6,526.0 453.7,528.3 462.9,530.5 475.4,532.8 489.1,534.4 500.6,534.4 509.7,532.8 523.4,526.4 532.6,519.1 541.7,512.7 550.9,506.3 562.3,500.8 576.0,499.8 587.4,500.8 603.4,507.0 614.9,513.2 626.3,519.6 640.0,523.7 667.4,523.7 676.6,521.9" fill="none" stroke="#ff0000" stroke-width="2" stroke-linejoin="round" stroke-linecap="butt" shape-rendering="crispEdges"/></g><polygon points="12,546 12,551 17,551" fill="#8898aa"/><rect x="679" y="53" width="2" height="1" fill="#fff"/><text x="684.5" y="57" font-size="10.3" fill="#fff" stroke="#fff" stroke-width="0.25" text-anchor="start" textLength="33" lengthAdjust="spacingAndGlyphs" >1927.90</text><rect x="679" y="86" width="2" height="1" fill="#fff"/><text x="684.5" y="90" font-size="10.3" fill="#fff" stroke="#fff" stroke-width="0.25" text-anchor="start" textLength="33" lengthAdjust="spacingAndGlyphs" >1923.30</text><rect x="679" y="119" width="2" height="1" fill="#fff"/><text x="684.5" y="123" font-size="10.3" fill="#fff" stroke="#fff" stroke-width="0.25" text-anchor="start" textLength="33" lengthAdjust="spacingAndGlyphs" >1918.80</text><rect x="679" y="152" width="2" height="1" fill="#fff"/><text x="684.5" y="156" font-size="10.3" fill="#fff" stroke="#fff" stroke-width="0.25" text-anchor="start" textLength="33" lengthAdjust="spacingAndGlyphs" >1914.20</text><rect x="679" y="185" width="2" height="1" fill="#fff"/><text x="684.5" y="189" font-size="10.3" fill="#fff" stroke="#fff" stroke-width="0.25" text-anchor="start" textLength="33" lengthAdjust="spacingAndGlyphs" >1909.60</text><rect x="679" y="218" width="2" height="1" fill="#fff"/><text x="684.5" y="222" font-size="10.3" fill="#fff" stroke="#fff" stroke-width="0.25" text-anchor="start" textLength="33" lengthAdjust="spacingAndGlyphs" >1905.10</text><rect x="679" y="251" width="2" height="1" fill="#fff"/><text x="684.5" y="255" font-size="10.3" fill="#fff" stroke="#fff" stroke-width="0.25" text-anchor="start" textLength="33" lengthAdjust="spacingAndGlyphs" >1900.50</text><rect x="679" y="284" width="2" height="1" fill="#fff"/><text x="684.5" y="288" font-size="10.3" fill="#fff" stroke="#fff" stroke-width="0.25" text-anchor="start" textLength="33" lengthAdjust="spacingAndGlyphs" >1895.90</text><text x="682" y="300" font-size="10.3" fill="#fff" stroke="#fff" stroke-width="0.25" text-anchor="start" textLength="15" lengthAdjust="spacingAndGlyphs" >120</text><text x="682" y="306" font-size="10.3" fill="#fff" stroke="#fff" stroke-width="0.25" text-anchor="start" textLength="15" lengthAdjust="spacingAndGlyphs" >100</text><text x="682" y="317" font-size="10.3" fill="#fff" stroke="#fff" stroke-width="0.25" text-anchor="start" textLength="10" lengthAdjust="spacingAndGlyphs" >80</text><text x="682" y="335" font-size="10.3" fill="#fff" stroke="#fff" stroke-width="0.25" text-anchor="start" textLength="10" lengthAdjust="spacingAndGlyphs" >50</text><text x="682" y="363" font-size="10.3" fill="#fff" stroke="#fff" stroke-width="0.25" text-anchor="start" textLength="18" lengthAdjust="spacingAndGlyphs" >0.00</text><text x="680.5" y="392" font-size="10.3" fill="#fff" stroke="#fff" stroke-width="0.25" text-anchor="start" textLength="14" lengthAdjust="spacingAndGlyphs" >-50</text><text x="680.5" y="408" font-size="10.3" fill="#fff" stroke="#fff" stroke-width="0.25" text-anchor="start" textLength="14" lengthAdjust="spacingAndGlyphs" >-80</text><text x="680.5" y="413" font-size="10.3" fill="#fff" stroke="#fff" stroke-width="0.25" text-anchor="start" textLength="19" lengthAdjust="spacingAndGlyphs" >-100</text><text x="682" y="431" font-size="10.3" fill="#fff" stroke="#fff" stroke-width="0.25" text-anchor="start" textLength="23" lengthAdjust="spacingAndGlyphs" >8.276</text><text x="682" y="517" font-size="10.3" fill="#fff" stroke="#fff" stroke-width="0.25" text-anchor="start" textLength="18" lengthAdjust="spacingAndGlyphs" >0.00</text><text x="681" y="548" font-size="10.3" fill="#fff" stroke="#fff" stroke-width="0.25" text-anchor="start" textLength="27" lengthAdjust="spacingAndGlyphs" >-3.413</text><rect x="12" y="552" width="1" height="4" fill="#fff"/><text x="12" y="565" font-size="10.3" fill="#fff" stroke="#fff" stroke-width="0.25" text-anchor="start" textLength="50" lengthAdjust="spacingAndGlyphs" >13 Jan 2023</text><rect x="76" y="552" width="1" height="4" fill="#fff"/><text x="75.2" y="565" font-size="10.3" fill="#fff" stroke="#fff" stroke-width="0.25" text-anchor="start" textLength="53" lengthAdjust="spacingAndGlyphs" >16 Jan 02:00</text><rect x="140" y="552" width="1" height="4" fill="#fff"/><text x="139.2" y="565" font-size="10.3" fill="#fff" stroke="#fff" stroke-width="0.25" text-anchor="start" textLength="53" lengthAdjust="spacingAndGlyphs" >16 Jan 10:00</text><rect x="204" y="552" width="1" height="4" fill="#fff"/><text x="203.2" y="565" font-size="10.3" fill="#fff" stroke="#fff" stroke-width="0.25" text-anchor="start" textLength="53" lengthAdjust="spacingAndGlyphs" >16 Jan 18:00</text><rect x="268" y="552" width="1" height="4" fill="#fff"/><text x="267.2" y="565" font-size="10.3" fill="#fff" stroke="#fff" stroke-width="0.25" text-anchor="start" textLength="53" lengthAdjust="spacingAndGlyphs" >17 Jan 05:00</text><rect x="332" y="552" width="1" height="4" fill="#fff"/><text x="331.2" y="565" font-size="10.3" fill="#fff" stroke="#fff" stroke-width="0.25" text-anchor="start" textLength="53" lengthAdjust="spacingAndGlyphs" >17 Jan 13:00</text><rect x="396" y="552" width="1" height="4" fill="#fff"/><text x="395.2" y="565" font-size="10.3" fill="#fff" stroke="#fff" stroke-width="0.25" text-anchor="start" textLength="53" lengthAdjust="spacingAndGlyphs" >17 Jan 21:00</text><rect x="460" y="552" width="1" height="4" fill="#fff"/><text x="459.2" y="565" font-size="10.3" fill="#fff" stroke="#fff" stroke-width="0.25" text-anchor="start" textLength="53" lengthAdjust="spacingAndGlyphs" >18 Jan 06:00</text><rect x="524" y="552" width="1" height="4" fill="#fff"/><text x="523.2" y="565" font-size="10.3" fill="#fff" stroke="#fff" stroke-width="0.25" text-anchor="start" textLength="53" lengthAdjust="spacingAndGlyphs" >18 Jan 14:00</text><rect x="588" y="552" width="1" height="4" fill="#fff"/><text x="587.2" y="565" font-size="10.3" fill="#fff" stroke="#fff" stroke-width="0.25" text-anchor="start" textLength="53" lengthAdjust="spacingAndGlyphs" >18 Jan 22:00</text><rect x="652" y="552" width="1" height="4" fill="#fff"/><text x="651.2" y="565" font-size="10.3" fill="#fff" stroke="#fff" stroke-width="0.25" text-anchor="start" textLength="53" lengthAdjust="spacingAndGlyphs" >19 Jan 07:00</text></svg></body></html>
